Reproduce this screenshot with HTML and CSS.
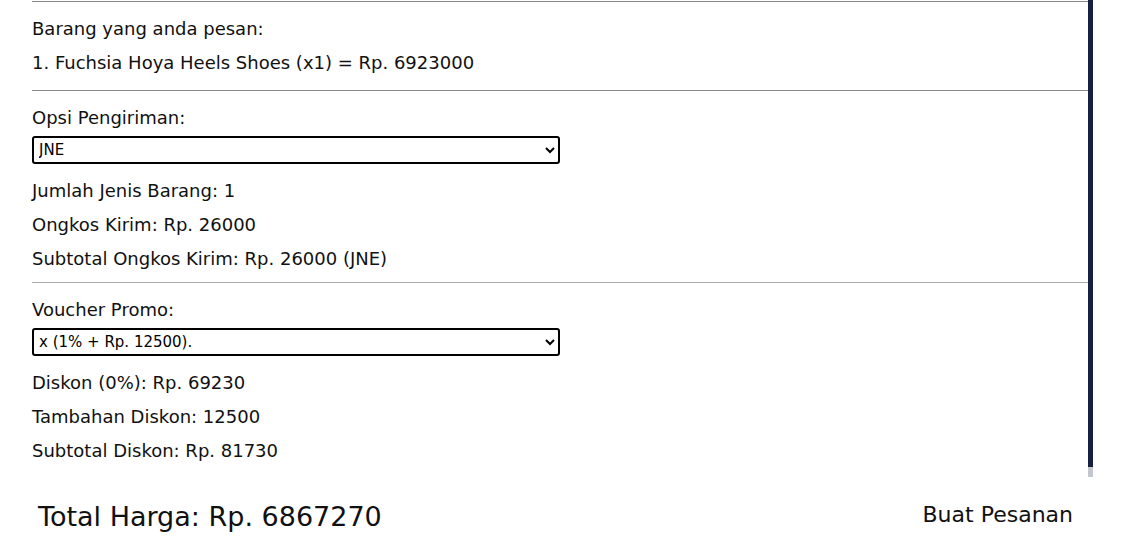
FILE: index.html
```html
<!DOCTYPE html>
<html lang="id">
<head>
<meta charset="utf-8">
<title>Checkout</title>
<link rel="stylesheet" href="styles.css">
</head>
<body>
<div class="page">
  <div class="panel">
    <div class="scroll">
      <section class="sec sec-first">
        <div class="row">Barang yang anda pesan:</div>
        <div class="row">1. Fuchsia Hoya Heels Shoes (x1) = Rp. 6923000</div>
      </section>
      <section class="sec">
        <div class="row">Opsi Pengiriman:</div>
        <select class="pick"><option>JNE</option><option>J&amp;T</option><option>SiCepat</option></select>
        <div class="rows">
          <div class="row">Jumlah Jenis Barang: 1</div>
          <div class="row">Ongkos Kirim: Rp. 26000</div>
          <div class="row">Subtotal Ongkos Kirim: Rp. 26000 (JNE)</div>
        </div>
      </section>
      <section class="sec sec-light">
        <div class="row">Voucher Promo:</div>
        <select class="pick"><option>x (1% + Rp. 12500).</option></select>
        <div class="rows">
          <div class="row">Diskon (0%): Rp. 69230</div>
          <div class="row">Tambahan Diskon: 12500</div>
          <div class="row">Subtotal Diskon: Rp. 81730</div>
        </div>
      </section>
    </div>
    <div class="bar">
      <div class="thumb"></div>
      <div class="track"></div>
    </div>
  </div>
  <div class="footer">
    <div class="total">Total Harga: Rp. 6867270</div>
    <button class="order" type="button">Buat Pesanan</button>
  </div>
</div>
</body>
</html>
```
FILE: styles.css
```css
* { box-sizing: border-box; }
html, body { margin: 0; padding: 0; background: #fff; }
body {
  font-family: "DejaVu Sans", "Noto Sans", sans-serif;
  color: #111;
}
.page { width: 1133px; height: 547px; }
.panel {
  display: flex;
  width: 1093px;
  height: 477px;
}
.scroll {
  flex: 1;
  overflow: hidden;
  padding: 1px 0 13px 32px;
}
.bar {
  width: 5px;
  display: flex;
  flex-direction: column;
}
.thumb { flex: 1; background: #172140; }
.track { height: 10px; background: #c3c6ce; }
.sec {
  border-top: 1px solid #8a8a8a;
  padding: 10px 0 6px 0;
}
.sec-first { padding-bottom: 10px; }
.sec-light { border-top-color: #ababab; }
.row {
  height: 34px;
  line-height: 34px;
  font-size: 18px;
  white-space: nowrap;
}
.pick {
  display: block;
  width: 528px;
  height: 28px;
  margin: 1px 0 10px 0;
  border: 2px solid #000;
  border-radius: 3px;
  background: #fff;
  font-family: "DejaVu Sans", "Noto Sans", sans-serif;
  font-size: 15px;
  color: #000;
  padding: 0 1px;
}
.footer {
  display: flex;
  align-items: center;
  justify-content: space-between;
  height: 70px;
  padding: 8px 60px 0 38px;
}
.total { font-size: 27px; }
.order {
  background: none;
  border: none;
  padding: 0;
  margin-top: -3px;
  font-family: "DejaVu Sans", "Noto Sans", sans-serif;
  font-size: 22px;
  color: #111;
}
```
